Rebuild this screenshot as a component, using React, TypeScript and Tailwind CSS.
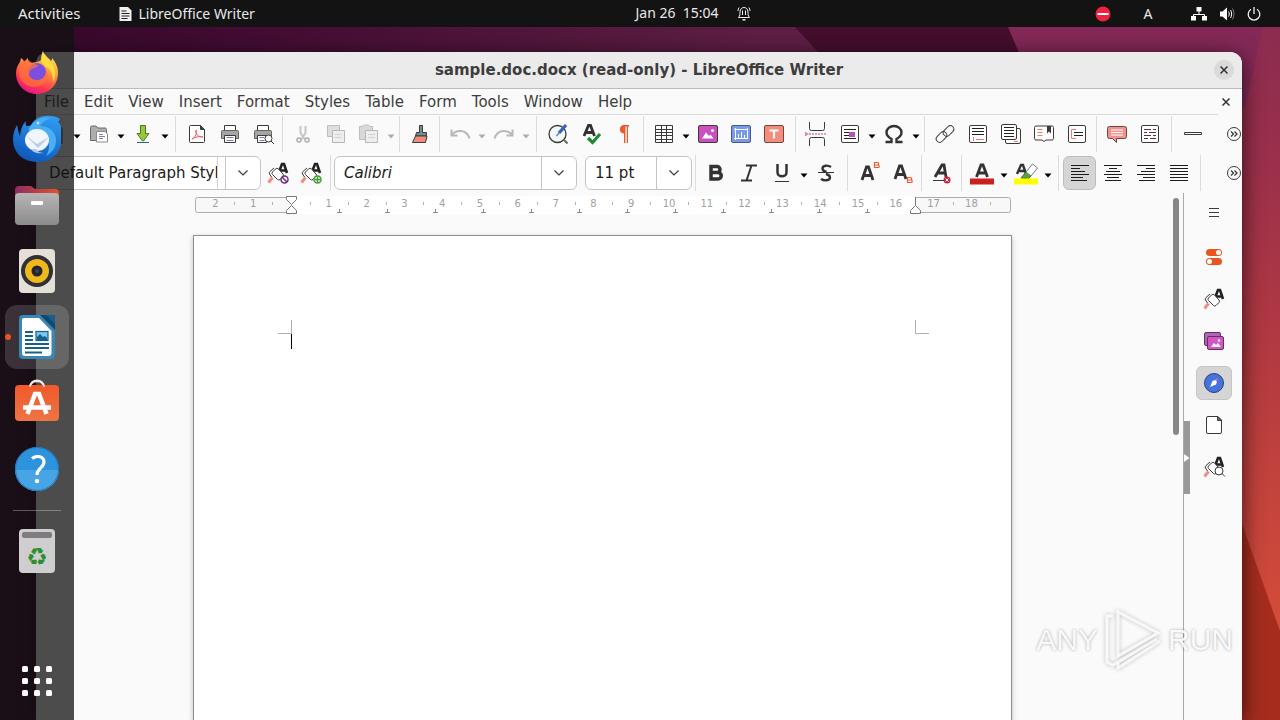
import React from 'react';

interface IconProps {
  children: React.ReactNode;
  size?: string;
  box?: string;
}

const Icon: React.FC<IconProps> = ({ children, size = 'w-6 h-6', box = '0 0 24 24' }) => (
  <svg viewBox={box} className={`${size} shrink-0`} fill="none" stroke="#3a3a38" strokeWidth="1" aria-hidden="true">
    {children}
  </svg>
);

interface ToolProps {
  label: string;
  active?: boolean;
  disabled?: boolean;
  children: React.ReactNode;
}

const Tool: React.FC<ToolProps> = ({ label, active, disabled, children }) => (
  <button
    type="button"
    aria-label={label}
    title={label}
    disabled={disabled}
    className={`flex h-[34px] w-[33px] shrink-0 items-center justify-center rounded-md ${
      active ? 'border border-[#bdbdbd] bg-[#d5d5d5]' : ''
    } ${disabled ? 'opacity-40' : ''}`}
  >
    <Icon>{children}</Icon>
  </button>
);

const Arrow: React.FC<{ label: string; disabled?: boolean }> = ({ label, disabled }) => (
  <button
    type="button"
    aria-label={label}
    disabled={disabled}
    className={`flex h-[34px] w-[11px] shrink-0 items-center justify-center ${disabled ? 'opacity-30' : ''}`}
  >
    <svg viewBox="0 0 8 5" className="mt-1 h-[5px] w-2" aria-hidden="true">
      <path d="M.5 .5h7L4 4.500z" fill="#000" />
    </svg>
  </button>
);

const Sep: React.FC<{ wide?: boolean }> = ({ wide }) => (
  <div className={`flex h-9 shrink-0 justify-center ${wide ? 'w-[10px]' : 'w-[7px]'}`}>
    <div className="w-px bg-[#dcdcdc]" />
  </div>
);

const Overflow: React.FC<{ label: string }> = ({ label }) => (
  <button type="button" aria-label={label} className="ml-auto flex h-[34px] w-4 shrink-0 items-center justify-center">
    <Icon size="w-4 h-4" box="0 0 16 16">
      <circle cx="8" cy="8" r="6.500" />
      <path d="M5 5.500l2.500 2.500L5 10.500M8.500 5.500L11 8l-2.500 2.500" strokeWidth="1.300" />
    </Icon>
  </button>
);

const Chevron: React.FC = () => (
  <svg viewBox="0 0 10 6" className="h-[6px] w-[10px]" fill="none" stroke="#3a3a38" strokeWidth="1.200" aria-hidden="true">
    <path d="M.5 .5L5 5L9.500 .5" />
  </svg>
);

/* Paint roller with a letter A, shared by the style icons */
const StyleRoller: React.FC = () => (
  <>
    <path d="M12.500 12l3.500-9h2l3 9M14 9.500h6" stroke="#222" strokeWidth="2.600" />
    <path d="M2.500 21.500l4-5" stroke="#f28b82" strokeWidth="3" />
    <path d="M5.500 16l-2-3a2 2 0 0 1 .5-2.500l4-3.500" />
    <path d="M6.500 11l3-3a2 2 0 0 1 3 0l4.500 5a2 2 0 0 1 0 2.500l-3 3a2 2 0 0 1-2.500 0l-5-5a1.800 1.800 0 0 1 0-2.500z" fill="#fff" />
  </>
);

const StandardToolbar: React.FC = () => (
  <div className="flex h-[38px] shrink-0 items-center pl-[2px]" role="toolbar" aria-label="Standard">
    <Tool label="New">
      <path d="M5 2.500h10l4 4v15H5z" fill="#fff" />
    </Tool>
    <Arrow label="New options" />
    <Tool label="Open">
      <path d="M3.500 18.500v-13a1.500 1.500 0 0 1 1.500-1.500h4l2 2h7a1.500 1.500 0 0 1 1.500 1.500v11z" fill="#adadab" stroke="#6a6a68" />
      <path d="M9.500 9.500h8.500l2.500 2.500v8H9.500z" fill="#fff" stroke="#8a8a88" />
      <path d="M12 12.500h4M12 14.500h6M12 16.500h4" stroke="#7a83ae" />
    </Tool>
    <Arrow label="Recent documents" />
    <Tool label="Save">
      <path d="M9.500 3.500h5v8h3.500l-5.500 7.500h-1L6 11.500h3.500z" fill="#92c83e" stroke="#4d7a16" />
      <path d="M6 20.500h12" stroke="#2e5f8f" />
    </Tool>
    <Arrow label="Save options" />
    <Sep wide />
    <Tool label="Export as PDF">
      <path d="M4.500 4.500a1 1 0 0 1 1-1h10l4 4v12a1 1 0 0 1-1 1h-13a1 1 0 0 1-1-1z" fill="#fff" />
      <path d="M15.500 3.500v4h4z" fill="#3a3a38" />
      <path d="M7 17c4-2 5-6 4-9-1 4 2 7 7 7-4-1-8 0-11 2z" stroke="#ed5a6b" />
    </Tool>
    <Tool label="Print">
      <path d="M6.500 8.500v-5h11v5" fill="#fff" />
      <path d="M3.500 9.500a1 1 0 0 1 1-1h15a1 1 0 0 1 1 1v7h-3v-3h-11v3h-3z" fill="#a5a5a3" stroke="#656563" />
      <path d="M6.500 13.500h11v7h-11z" fill="#fff" />
      <path d="M8.500 15.500h7M8.500 18.500h7" stroke="#747eb5" />
    </Tool>
    <Tool label="Print Preview">
      <path d="M6.500 8.500v-5h11v5" fill="#fff" />
      <path d="M3.500 9.500a1 1 0 0 1 1-1h15a1 1 0 0 1 1 1v7h-3v-3h-11v3h-3z" fill="#a5a5a3" stroke="#656563" />
      <path d="M6.500 13.500h9v7h-9z" fill="#fff" />
      <path d="M8.500 15.500h5M8.500 18.500h5" stroke="#747eb5" />
      <circle cx="17.500" cy="16.500" r="3.500" fill="#fff" />
      <path d="M20 19l3 3" />
    </Tool>
    <Sep />
    <Tool label="Cut" disabled>
      <path d="M9.500 4v7l4 6M14.500 4v7l-4 6" stroke="#777" strokeWidth="2" />
      <circle cx="8" cy="18" r="2" strokeWidth="1.500" />
      <circle cx="16" cy="18" r="2" strokeWidth="1.500" />
    </Tool>
    <Tool label="Copy" disabled>
      <path d="M3.500 3.500h12v11h-12z" fill="#b5b5b3" stroke="#666" />
      <path d="M8.500 8.500h12v12h-12z" fill="#ddd" stroke="#555" />
      <path d="M11 12.500h7M11 15.500h7" stroke="#999" />
    </Tool>
    <Tool label="Paste" disabled>
      <path d="M2.500 4.500h3l1-1.500h5l1 1.500h3v13h-13z" fill="#aaaaa8" stroke="#666" />
      <path d="M8.500 8.500h12v12h-12z" fill="#ddd" stroke="#555" />
      <path d="M11 12.500h7M11 15.500h7" stroke="#999" />
    </Tool>
    <Arrow label="Paste options" disabled />
    <Sep />
    <Tool label="Clone Formatting">
      <path d="M11.500 3.500h3v7h4v3.500h-11l1-3.500h3z" fill="#6f8d92" />
      <path d="M7.500 14h11.500l-1.500 6.500H4.500z" fill="#f28b7c" />
    </Tool>
    <Sep />
    <Tool label="Undo" disabled>
      <path d="M3.500 7.500v6h6M3.500 13.500c4-6 15-7 18 3" strokeWidth="2" stroke="#555" />
    </Tool>
    <Arrow label="Undo history" disabled />
    <Tool label="Redo" disabled>
      <path d="M20.500 7.500v6h-6M20.500 13.500c-4-6-15-7-18 3" strokeWidth="2" stroke="#555" />
    </Tool>
    <Arrow label="Redo history" disabled />
    <Sep wide />
    <Tool label="Find and Replace">
      <circle cx="11.500" cy="12" r="8.500" fill="#f4f7fa" strokeWidth="1.300" />
      <path d="M17.500 17.500l4 4" strokeWidth="2" stroke="#666" />
      <path d="M13 11l7-8" stroke="#2f62c4" strokeWidth="3.200" />
      <path d="M10.500 14l2.500-3" strokeWidth="1.200" stroke="#4d76bd" />
    </Tool>
    <Tool label="Spelling">
      <path d="M5 14L9.500 3.500h2L15.500 14M6.500 10.500h7.500" stroke="#333" strokeWidth="2.800" />
      <path d="M9 16l4.500 4.500L21 12" stroke="#1d8a34" strokeWidth="3.200" />
    </Tool>
    <Tool label="Formatting Marks">
      <path d="M12 3h5v1.500h-1V21h-1.200V4.500h-1.400V21h-1.400v-9.500a4.200 4.200 0 0 1 0-8.500z" fill="#ea5a2b" stroke="none" />
    </Tool>
    <Sep />
    <Tool label="Insert Table">
      <path d="M3.500 3.500h17v17h-17zM3.500 7.500h17M3.500 10.500h17M3.500 13.500h17M3.500 17.500h17M9.500 3.500v17M14.500 3.500v17" />
    </Tool>
    <Arrow label="Table size" />
    <Tool label="Insert Image">
      <rect x="2.500" y="3.500" width="19" height="17" rx="1.500" fill="#cb4fc0" />
      <path d="M6 16.500l4-6 3 3.500 1.500-1.500 3 4z" fill="#fff" stroke="none" />
      <circle cx="16.500" cy="8.500" r="1.500" fill="#fff" stroke="none" />
    </Tool>
    <Tool label="Insert Chart">
      <rect x="2.500" y="3.500" width="19" height="17" rx="1.500" fill="#789be8" stroke="#4c5a80" />
      <path d="M6.500 6v12M5 16.500h14M5 7.500h14M18.500 6v11M9.500 16v-4M12.500 16v-6M15.500 16v-3" stroke="#fff" />
    </Tool>
    <Tool label="Insert Text Box">
      <rect x="2.500" y="3.500" width="19" height="17" rx="1.500" fill="#f58b78" stroke="#6b4a45" />
      <path d="M7.500 8.500h9M12 8.500v8" stroke="#fff" strokeWidth="2.200" />
    </Tool>
    <Sep wide />
    <Tool label="Insert Page Break">
      <path d="M4.500 0v6.500a2 2 0 0 0 2 2h11a2 2 0 0 0 2-2V0M4.500 24v-6.500a2 2 0 0 1 2-2h11a2 2 0 0 1 2 2V24" />
      <path d="M4 12h17" stroke="#c0447c" strokeDasharray="2 1" />
      <path d="M0 9.500v5l4-2.500z" fill="#d987ad" stroke="none" />
    </Tool>
    <Tool label="Insert Field">
      <rect x="3.500" y="3.500" width="17" height="17" rx="1.500" fill="#fff" />
      <path d="M6 7.500h12M6 10.500h5M6 13.500h5M6 16.500h12" stroke="#222" />
      <path d="M11 10h6v5h-6z" fill="#b552b5" stroke="none" />
    </Tool>
    <Arrow label="Field options" />
    <Tool label="Insert Special Character">
      <path d="M3.500 20h6v-3C6 15 4.500 12.500 4.500 10.500a7.500 6.500 0 0 1 15 0c0 2-1.500 4.500-5 6.500v3h6" stroke="#333" strokeWidth="2.400" />
    </Tool>
    <Arrow label="Recent characters" />
    <Sep />
    <Tool label="Insert Hyperlink">
      <rect x="2.500" y="11.500" width="12" height="7" rx="3.500" transform="rotate(-45 8.500 15)" />
      <rect x="9.500" y="5.500" width="12" height="7" rx="3.500" transform="rotate(-45 15.500 9)" />
    </Tool>
    <Tool label="Insert Footnote">
      <rect x="3.500" y="3.500" width="17" height="17" rx="1.500" fill="#fff" />
      <path d="M6 6.500h12M6 9.500h12M6 12.500h12" stroke="#222" />
      <path d="M7.500 15v4M10 17.500h8" stroke="#ef7a70" />
    </Tool>
    <Tool label="Insert Endnote">
      <rect x="6.500" y="6.500" width="15" height="15" rx="1.500" fill="#fff" />
      <rect x="2.500" y="2.500" width="15" height="15" rx="1.500" fill="#fff" />
      <path d="M5 5.500h10M5 8.500h10M5 11.500h10M5 14.500h10" stroke="#222" />
      <path d="M15 19.500h4" stroke="#ef7a70" />
    </Tool>
    <Tool label="Insert Bookmark">
      <path d="M2.500 5.500a1.500 1.500 0 0 1 1.500-1.500h16a1.500 1.500 0 0 1 1.500 1.500v11a1.500 1.500 0 0 1-1.500 1.500h-6l-2 1.500-2-1.500H4a1.500 1.500 0 0 1-1.500-1.500z" fill="#fff" />
      <path d="M5.500 7.500h5M5.500 10.500h5M5.500 13.500h5" stroke="#ef7a70" />
      <path d="M15 4h4v7.500l-2-2-2 2z" fill="#3a3a38" stroke="none" />
    </Tool>
    <Tool label="Insert Cross-reference">
      <rect x="3.500" y="3.500" width="17" height="17" rx="1.500" fill="#fff" />
      <path d="M11 7.500H6.500v9H11" stroke="#ef7a70" />
      <path d="M9 10.500h9M9 13.500h9" stroke="#222" />
    </Tool>
    <Sep />
    <Tool label="Insert Comment">
      <path d="M4.500 4.500h15a2 2 0 0 1 2 2v8a2 2 0 0 1-2 2h-8v4l-4-4h-3a2 2 0 0 1-2-2v-8a2 2 0 0 1 2-2z" fill="#f0938c" stroke="#6d4643" />
      <path d="M6 8h12M6 10.500h12M6 13h12" stroke="#fff" />
    </Tool>
    <Tool label="Track Changes">
      <rect x="3.500" y="3.500" width="17" height="17" rx="1.500" fill="#fff" />
      <path d="M6 7.500h7M15 7.500h3M6 10.500h3M11 10.500h7M6 13.500h7M15 13.500h3M6 16.500h4M12 16.500h6" stroke="#5b3044" />
    </Tool>
    <Sep wide />
    <Tool label="Insert Line">
      <path d="M3.500 10.500h17v2h-17z" />
    </Tool>
    <Overflow label="More standard tools" />
  </div>
);

const FormattingToolbar: React.FC = () => (
  <div className="flex h-10 shrink-0 items-center" role="toolbar" aria-label="Formatting">
    <div className="flex h-[34px] w-[225px] shrink-0 overflow-hidden rounded-md border border-[#c4c4c4] bg-white">
      <input
        aria-label="Paragraph style"
        defaultValue="Default Paragraph Style"
        className="w-[181px] border-r border-[#d4d4d4] pl-3 text-[15px] text-[#1a1a1a] outline-none"
      />
      <button type="button" aria-label="Paragraph style list" className="ml-[7px] flex grow items-center justify-center border-l border-[#c4c4c4]">
        <Chevron />
      </button>
    </div>
    <Tool label="Update Selected Style">
      <StyleRoller />
      <circle cx="18.500" cy="18.500" r="3.500" fill="#fff" stroke="#6e2a82" strokeWidth="1.500" />
      <path d="M16 16l5 5" stroke="#6e2a82" strokeWidth="1.500" />
    </Tool>
    <Tool label="New Style from Selection">
      <StyleRoller />
      <circle cx="18.500" cy="18.500" r="3.500" fill="#fff" stroke="#3c9a30" strokeWidth="1.500" />
      <path d="M18.500 16v5M16 18.500h5" stroke="#3c9a30" strokeWidth="1.500" />
    </Tool>
    <Sep />
    <div className="flex h-[34px] w-[243px] shrink-0 overflow-hidden rounded-md border border-[#c4c4c4] bg-white">
      <input
        aria-label="Font name"
        defaultValue="Calibri"
        className="w-[207px] border-r border-[#c4c4c4] pl-[9px] text-[15px] text-[#1a1a1a] italic outline-none"
      />
      <button type="button" aria-label="Font list" className="flex grow items-center justify-center">
        <Chevron />
      </button>
    </div>
    <div className="ml-2 flex h-[34px] w-[107px] shrink-0 overflow-hidden rounded-md border border-[#c4c4c4] bg-white">
      <input
        aria-label="Font size"
        defaultValue="11 pt"
        className="w-[71px] border-r border-[#c4c4c4] pl-[9px] text-[15px] text-[#1a1a1a] outline-none"
      />
      <button type="button" aria-label="Font size list" className="flex grow items-center justify-center">
        <Chevron />
      </button>
    </div>
    <Sep />
    <Tool label="Bold">
      <path d="M7 5.500h6a2.800 2.800 0 0 1 0 6H7zM7 11.500h7a3 3 0 0 1 0 6.500H7z" stroke="#333" strokeWidth="3.500" />
    </Tool>
    <Tool label="Italic">
      <path d="M9 4.500h11M4 19.500h11M14.500 4.500l-5 15" stroke="#333" strokeWidth="2" />
    </Tool>
    <Tool label="Underline">
      <path d="M7.500 3v8.500c0 5 9 5 9 0V3" stroke="#333" strokeWidth="2.500" />
      <path d="M5 20.500h14" stroke="#333" />
    </Tool>
    <Arrow label="Underline styles" />
    <Tool label="Strikethrough">
      <path d="M17 6c-3-2-8.500-2-8.500 1.500 0 2 2 3 4 3.500M12 13c2 .5 4 1.500 4 3.500 0 3.500-6 3.500-9 1.500" stroke="#333" strokeWidth="2.400" />
      <path d="M4 11.500h16" stroke="#333" />
    </Tool>
    <Sep wide />
    <Tool label="Superscript">
      <path d="M5 19l4.500-13h2L16 19M6.500 14.500h8" stroke="#333" strokeWidth="2.800" />
      <path d="M17.500 1.500h3a1 1 0 0 1 0 2.500h-3zM17.500 4h3.500a1 1 0 0 1 0 2.500h-3.500z" stroke="#ea5a2b" strokeWidth="1.200" />
    </Tool>
    <Tool label="Subscript">
      <path d="M5 18l4.500-13h2L16 18M6.500 13.500h8" stroke="#333" strokeWidth="2.800" />
      <path d="M17.500 16.500h3a1 1 0 0 1 0 2.500h-3zM17.500 19h3.500a1 1 0 0 1 0 2.500h-3.500z" stroke="#ea5a2b" strokeWidth="1.200" />
    </Tool>
    <Sep />
    <Tool label="Clear Direct Formatting">
      <path d="M5 16l7-12h2l2 12M8 12h8" stroke="#333" strokeWidth="2.800" />
      <path d="M3 19.500h12" />
      <circle cx="17" cy="19" r="3.500" fill="#c8203c" stroke="none" />
      <path d="M15.500 17.500l3 3M18.500 17.500l-3 3" stroke="#fff" />
    </Tool>
    <Sep />
    <Tool label="Font Color">
      <path d="M6.500 16l4.500-12h2l4.500 12M8 12h8" stroke="#333" strokeWidth="2.800" />
      <path d="M0 20.500h24" stroke="#c9211e" strokeWidth="6" />
    </Tool>
    <Arrow label="Font color list" />
    <Tool label="Highlighting">
      <path d="M3 13l4-9h2l3 9M4 10h7" stroke="#333" strokeWidth="2.400" />
      <path d="M7 17l5-6 5 4-3 3z" fill="#5da13a" stroke="#3f7427" />
      <path d="M12 11l6.500-8 5 4-6.500 8z" fill="#fff" stroke="#6f7c84" />
      <path d="M0 20.500h24" stroke="#ffff00" strokeWidth="6" />
    </Tool>
    <Arrow label="Highlighting list" />
    <Sep wide />
    <Tool label="Align Left" active>
      <path d="M3 4.500h18M3 7.500h9M3 10.500h14M3 13.500h18M3 16.500h12M3 19.500h16" stroke="#1c1c1c" />
    </Tool>
    <Tool label="Align Center">
      <path d="M3 4.500h18M8 7.500h8M5 10.500h14M3 13.500h18M6 16.500h12M4 19.500h16" stroke="#1c1c1c" />
    </Tool>
    <Tool label="Align Right">
      <path d="M3 4.500h18M12 7.500h9M7 10.500h14M3 13.500h18M9 16.500h12M5 19.500h16" stroke="#1c1c1c" />
    </Tool>
    <Tool label="Justified">
      <path d="M3 4.500h18M3 7.500h18M3 10.500h18M3 13.500h18M3 16.500h18M3 19.500h18" stroke="#1c1c1c" />
    </Tool>
    <Sep wide />
    <Overflow label="More formatting tools" />
  </div>
);

const labels = Array.from({ length: 21 }, (_, i) => i - 2);
const CM = 37.8;

const Ruler: React.FC = () => (
  <svg viewBox="0 0 819 20" className="mx-auto h-5 w-[819px] shrink-0" fill="none" aria-label="Ruler">
    <rect x="2.500" y="1.500" width="815" height="15" rx="2" fill="#f8f8f8" stroke="#adadad" />
    <rect x="98" y="0" width="624" height="18" fill="#fff" />
    {labels.map((n) => (
      <React.Fragment key={n}>
        {n !== 0 && (
          <text
            x={98 + n * CM}
            y="11"
            textAnchor="middle"
            className={n > 18 ? 'hidden' : 'fill-[#a0a0a0] text-[10px] [font-family:"DejaVu_Sans",sans-serif]'}
          >
            {Math.abs(n)}
          </text>
        )}
        {n < 19 && <path d={`M${Math.round(98 + (n + 0.5) * CM) + 0.5} 6v3`} stroke="#b0b0b0" />}
      </React.Fragment>
    ))}
    {Array.from({ length: 12 }, (_, i) => Math.round(98 + (i + 1) * 48) + 0.5).map((x) => (
      <path key={x} d={`M${x} 13v3M${x - 2.5} 16.500h5`} stroke="#8a8a8a" />
    ))}
    <path d="M93.500 .5h10v3l-5 5-5-5zM93.500 17.500h10v-3l-5-5-5 5z" fill="#fff" stroke="#777" />
    <path d="M717.500 17.500h10v-3l-5-5-5 5zM722.500 9v-8" fill="#fff" stroke="#777" />
  </svg>
);

const Document: React.FC = () => (
  <div className="flex min-w-0 grow flex-col pt-[3px]">
    <Ruler />
    <div className="mx-auto mt-[19px] flex w-[819px] grow flex-col border border-b-0 border-[#8f8f8f] bg-white pt-[84px] shadow-[0_2px_5px_rgba(0,0,0,0.25)]">
      <div className="flex justify-between pr-[82px] pl-[84px]">
        <svg viewBox="0 0 14 14" className="h-[14px] w-[14px]" fill="none" stroke="#b0b0b0">
          <path d="M13.500 0v13.500H0" />
        </svg>
        <svg viewBox="0 0 14 14" className="h-[14px] w-[14px]" fill="none" stroke="#b0b0b0">
          <path d="M.5 0v13.500H14" />
        </svg>
      </div>
      <div className="ml-[97px] h-[15px] w-px bg-black" />
    </div>
  </div>
);

const SideTab: React.FC<ToolProps> = ({ label, active, children }) => (
  <button
    type="button"
    aria-label={label}
    title={label}
    className={`flex h-[34px] w-9 shrink-0 items-center justify-center rounded-md ${active ? 'border border-[#c6c6c6] bg-[#d5d5d5]' : ''}`}
  >
    <Icon>{children}</Icon>
  </button>
);

const Sidebar: React.FC = () => (
  <aside className="flex w-[59px] shrink-0 border-l border-[#a8a8a8]">
    <button
      type="button"
      aria-label="Hide sidebar"
      className="mt-[228px] flex h-[73px] w-[6px] items-center bg-[#999999]"
    >
      <svg viewBox="0 0 6 8" className="h-2 w-[6px]">
        <path d="M0 0l5.500 4L0 8z" fill="#fff" />
      </svg>
    </button>
    <div className="flex grow flex-col items-center gap-2 pt-[3px] pr-1">
      <div className="pb-[2px]">
        <SideTab label="Sidebar Settings">
          <path d="M7 7.500h10M7 11.500h10M7 15.500h10" />
        </SideTab>
      </div>
      <SideTab label="Properties">
        <rect x="4" y="4" width="16" height="7" rx="3.500" fill="#e95420" stroke="none" />
        <circle cx="16.500" cy="7.500" r="2.500" fill="#fff" stroke="none" />
        <rect x="4" y="13" width="16" height="7" rx="3.500" fill="#e95420" stroke="none" />
        <circle cx="7.500" cy="16.500" r="2.500" fill="#fff" stroke="none" />
      </SideTab>
      <SideTab label="Styles">
        <StyleRoller />
      </SideTab>
      <SideTab label="Gallery">
        <rect x="2.500" y="3.500" width="16" height="13" rx="1.500" fill="#b163b8" stroke="#64305f" />
        <rect x="5.500" y="7.500" width="16" height="13" rx="1.500" fill="#d254c6" stroke="#64305f" />
        <path d="M9 18l3-4 2 2 2-2 3 4z" fill="#fff" stroke="none" />
        <circle cx="17" cy="11.500" r="1.300" fill="#fff" stroke="none" />
      </SideTab>
      <SideTab label="Navigator" active>
        <circle cx="12" cy="12" r="9.500" fill="#4673df" stroke="#2d4076" />
        <path d="M8 16l2.500-6 3.500 3.500z" fill="#fff" stroke="none" />
        <path d="M12 9.500l4-2.500-1.500 4z" fill="#f07c86" stroke="none" />
        <circle cx="12.500" cy="11.500" r="2.200" fill="#fff" stroke="none" />
      </SideTab>
      <SideTab label="Page">
        <path d="M4.500 5a1.500 1.500 0 0 1 1.500-1.500h10l3.500 3.500v12a1.500 1.500 0 0 1-1.500 1.500H6A1.500 1.500 0 0 1 4.500 19z" fill="#fff" />
        <path d="M15.500 3.500v4h4z" fill="#777" />
      </SideTab>
      <SideTab label="Style Inspector">
        <StyleRoller />
        <circle cx="17" cy="16" r="4" fill="#fff" />
        <path d="M20 18.500l3 3" />
      </SideTab>
    </div>
  </aside>
);

const menus = ['File', 'Edit', 'View', 'Insert', 'Format', 'Styles', 'Table', 'Form', 'Tools', 'Window', 'Help'];

const CloseMark: React.FC = () => (
  <svg viewBox="0 0 8 8" className="h-2 w-2" stroke="#333" strokeWidth="1.500" aria-hidden="true">
    <path d="M.5 .5l7 7M7.500 .5l-7 7" />
  </svg>
);

const WriterWindow: React.FC = () => (
  <main className="absolute top-[52px] right-[38px] bottom-0 left-9 flex flex-col overflow-hidden rounded-t-xl bg-[#fafafa] text-[#3d3d3d] shadow-[0_4px_22px_rgba(0,0,0,0.7)] [font-family:'DejaVu_Sans',sans-serif]">
    <header className="flex h-[37px] shrink-0 items-center border-b border-[#bcbcbc] bg-[#ebebeb] pr-2 pl-7">
      <h1 className="grow text-center text-[15px] font-bold">sample.doc.docx (read-only) - LibreOffice Writer</h1>
      <button type="button" aria-label="Close window" className="flex h-5 w-5 items-center justify-center rounded-full bg-[#dadada]">
        <CloseMark />
      </button>
    </header>
    <div className="flex h-[26px] shrink-0 items-center">
      <nav className="flex grow items-center gap-[15px] self-stretch border-b border-[#dadada] pt-[2px] pl-2 text-[15px]">
        {menus.map((m) => (
          <button key={m} type="button">
            {m}
          </button>
        ))}
      </nav>
      <button type="button" aria-label="Close document" className="flex h-6 w-6 items-center justify-center pr-2">
        <CloseMark />
      </button>
    </div>
    <StandardToolbar />
    <FormattingToolbar />
    <div className="flex min-h-0 grow">
      <Document />
      <div className="flex w-[14px] shrink-0 justify-center pt-[5px]">
        <div className="h-[237px] w-[6px] rounded-full bg-[#888888]" />
      </div>
      <Sidebar />
    </div>
  </main>
);

interface DockItemProps {
  label: string;
  running?: boolean;
  children: React.ReactNode;
}

const DockItem: React.FC<DockItemProps> = ({ label, running, children }) => (
  <button
    type="button"
    aria-label={label}
    title={label}
    className={`relative flex h-16 w-16 shrink-0 items-center justify-center rounded-xl ${running ? 'bg-white/15' : ''}`}
  >
    {running && <span className="absolute top-[29px] left-0 h-[6px] w-[6px] rounded-full bg-[#e95420]" />}
    <svg viewBox="0 0 48 48" className="h-12 w-12" aria-hidden="true">
      {children}
    </svg>
  </button>
);

const Dock: React.FC = () => (
  <aside className="absolute top-0 bottom-0 left-0 flex w-[74px] flex-col items-center gap-[2px] bg-[#111111]/75 pt-[14px] pb-[6px]">
    <svg width="0" height="0" className="absolute">
      <defs>
        <linearGradient id="fox" x1="0.8" y1="0" x2="0.3" y2="1">
          <stop offset="0" stopColor="#fff44f" />
          <stop offset="0.4" stopColor="#ff9640" />
          <stop offset="0.75" stopColor="#ff3750" />
          <stop offset="1" stopColor="#e31587" />
        </linearGradient>
        <linearGradient id="bird" x1="0.7" y1="0" x2="0.3" y2="1">
          <stop offset="0" stopColor="#2f9bf0" />
          <stop offset="1" stopColor="#0d55b8" />
        </linearGradient>
        <linearGradient id="folder" x1="0" y1="0" x2="1" y2="0">
          <stop offset="0" stopColor="#8b2e62" />
          <stop offset="1" stopColor="#e8502a" />
        </linearGradient>
        <linearGradient id="grey" x1="0" y1="0" x2="0" y2="1">
          <stop offset="0" stopColor="#b5b5b5" />
          <stop offset="1" stopColor="#8c8c8c" />
        </linearGradient>
        <linearGradient id="bag" x1="0" y1="0" x2="0" y2="1">
          <stop offset="0" stopColor="#f0592a" />
          <stop offset="1" stopColor="#ee7444" />
        </linearGradient>
      </defs>
    </svg>
    <DockItem label="Firefox">
      <path
        d="M30 2c1 4 5 6 8 10 1-1 1-2 1-3 4 5 6 9 6 15 0 12-9 21-21 21S3 36 3 24c0-5 2-8 4-11l1-4c2 1 3 3 3 4l4-4c0 3 1 5 3 5 4-1 8-1 10-3 1-2 0-5 2-9z"
        fill="url(#fox)"
      />
      <circle cx="24" cy="23" r="9" fill="#7b4fe0" />
      <path d="M11 12c3-1 5-1 7 1 2 2 5 2 7 3 0 3-7 3-8 6-3 6 2 9 8 9 6-1 8-5 8-10 4 6 1 13-6 16-9 3-20-2-21-12-1-5 1-10 5-13z" fill="#ff7139" fillOpacity="0.75" />
      <path d="M30 3c1 4 7 8 10 14 3 5 3 11 0 16 0-8-2-13-8-16-4-3-5-7-2-14z" fill="#ffdc3f" />
    </DockItem>
    <DockItem label="Thunderbird">
      <path
        d="M18 10c4-7 11-10 20-9 3 0 6 1 9 3l-2 3c4 3 4 9 4 15 0 14-9 25-24 25C10 47 0 38 0 24c0-6 2-10 4-14 1 4 1 7 3 11 1-7 2-11 6-15-1 5 0 6 5 4z"
        fill="url(#bird)"
      />
      <path d="M17 12c5-8 12-11 21-9-6 2-9 5-11 8 7 0 12 3 15 9 3 9-1 17-9 21 5-8 4-16-2-21-5-4-11-5-15-4-1-2 0-3 1-4z" fill="#4aaef5" />
      <ellipse cx="24" cy="25" rx="12" ry="11" fill="#f2f6fc" />
      <path d="M12.500 20L24 29l12-7-11 11z" fill="#b9cdea" />
      <path d="M23 34c2 3 5 4 8 4-6 1-11 0-13-4z" fill="#a9c9f2" />
      <circle cx="25" cy="8" r="1.200" fill="#d6efff" />
    </DockItem>
    <DockItem label="Files">
      <path d="M2 9a4 4 0 0 1 4-4h12l4 3h20a4 4 0 0 1 4 4v12H2z" fill="url(#folder)" />
      <rect x="2" y="12" width="44" height="32" rx="4" fill="url(#grey)" />
      <rect x="18" y="20" width="12" height="4" rx="1" fill="#fff" />
    </DockItem>
    <DockItem label="Rhythmbox">
      <rect x="6" y="2" width="36" height="44" rx="4" fill="#e4e0d8" />
      <circle cx="24" cy="24" r="16" fill="#303036" />
      <circle cx="24" cy="24" r="12" fill="#efb91d" />
      <circle cx="24" cy="24" r="5.500" fill="#25252b" />
      <circle cx="24" cy="24" r="2" fill="#3c4250" />
    </DockItem>
    <DockItem label="LibreOffice Writer" running>
      <path d="M10 2h19l13 13v27a4 4 0 0 1-4 4H10a4 4 0 0 1-4-4V6a4 4 0 0 1 4-4z" fill="#3a87b5" />
      <path d="M11 5h15l12.500 13v22a3 3 0 0 1-3 3H12a3 3 0 0 1-3-3V7a2 2 0 0 1 2-2z" fill="#fff" />
      <path d="M31 2h11v11z" fill="#175f8a" />
      <path d="M27 2l15 15v-6L33 2z" fill="#0f4a6e" />
      <path d="M12 19h8M12 23h8M12 27h8M12 31h24M12 35h24M12 39.500h17" stroke="#17608c" strokeWidth="1.800" />
      <rect x="23" y="18.500" width="12" height="9" fill="#7cc6ef" stroke="#17608c" strokeWidth="1.200" />
      <path d="M24 27v-3l3-3 3 3 2-1 2 2v2z" fill="#17608c" />
    </DockItem>
    <DockItem label="Ubuntu Software">
      <path d="M17 9c0-9 14-9 14 0" fill="none" stroke="#f4e8de" strokeWidth="2" />
      <rect x="2" y="6" width="44" height="36" rx="4" fill="url(#bag)" />
      <path d="M17 8c0-9 14-9 14 0" fill="none" stroke="#f4e8de" strokeWidth="1.500" />
      <path d="M14.500 35l7.500-20h4L33.500 35" fill="none" stroke="#fff" strokeWidth="4.500" />
      <path d="M10 28.500h28" stroke="#fff" strokeWidth="4.500" />
    </DockItem>
    <DockItem label="Help">
      <circle cx="24" cy="24" r="22" fill="#2d93dc" />
      <path d="M2 25a22 21 0 0 0 44 0z" fill="#47a4e5" />
      <circle cx="24" cy="24" r="21.500" fill="none" stroke="#1d77bd" />
      <path d="M19 13.500c5-4 12-2 12 3.500 0 6-7 6-7 13" fill="none" stroke="#fff" strokeWidth="3.200" />
      <circle cx="24" cy="36" r="2.200" fill="#fff" />
    </DockItem>
    <div className="mt-[7px] mb-[6px] h-px w-12 bg-white/30" />
    <DockItem label="Trash">
      <rect x="6" y="2" width="36" height="44" rx="4" fill="#cfcdcf" />
      <rect x="9" y="5" width="30" height="6" rx="2" fill="#7d7d7d" />
      <text x="24" y="38" textAnchor="middle" className="fill-[#2c8f2c] text-[24px] [font-family:'DejaVu_Sans',sans-serif]">
        ♻
      </text>
    </DockItem>
    <div className="mt-auto">
      <DockItem label="Show Applications">
        {[9, 21, 33].map((y) =>
          [9, 21, 33].map((x) => <rect key={`${x}-${y}`} x={x} y={y - 1} width="6" height="6" rx="1.500" fill="#fff" />)
        )}
      </DockItem>
    </div>
  </aside>
);

const TopBar: React.FC = () => (
  <header className="flex h-[27px] shrink-0 items-center bg-[#131313] text-[14px] text-[#e8e8e8] [font-family:'Noto_Sans',sans-serif]">
    <div className="flex flex-1 items-center gap-[38px] pl-[18px]">
      <button type="button" className="text-[15px]">Activities</button>
      <button type="button" className="flex items-center gap-[7px]">
        <svg viewBox="0 0 13 14" className="h-[14px] w-[13px]">
          <path d="M.5 0h8.500L12.500 3.500V14H.5z" fill="#f0f0f0" />
          <path d="M2.500 4h5M2.500 6.500h8M2.500 9h8M2.500 11.500h6" stroke="#222" />
        </svg>
        LibreOffice Writer
      </button>
    </div>
    <button type="button" className="flex items-center gap-[18px] pb-[2px] pl-[107px] whitespace-pre">
      Jan 26  15:04
      <svg viewBox="0 0 14 16" className="h-4 w-[14px]" fill="none" stroke="#eee">
        <path d="M1.500 12.500h11c-1.500-2-1.500-3-1.500-5.500 0-6-8-6-8 0 0 2.500 0 3.500-1.500 5.500z" />
        <path d="M5.500 14.800h3" strokeWidth="1.500" />
        <path d="M5.500 10V5.500M8.500 10V5.500M1 6c0-1.500.5-2.500 1-3.500M13 6c0-1.500-.5-2.500-1-3.500" />
      </svg>
    </button>
    <div className="flex flex-1 items-center justify-end pr-[19px]">
      <button type="button" aria-label="Do not disturb" className="mr-[32px]">
        <svg viewBox="0 0 16 16" className="h-4 w-4">
          <circle cx="8" cy="8" r="7.500" fill="#ee2340" />
          <path d="M2.500 8h11" stroke="#fff" strokeWidth="2" />
        </svg>
      </button>
      <button type="button" className="mr-[38px] w-[10px] text-center">A</button>
      <button type="button" aria-label="System menu" className="flex items-center gap-3">
        <svg viewBox="0 0 16 14" className="h-[14px] w-4" fill="#fff" stroke="#fff">
          <path d="M5.500 0h5v4.500h-5zM0 9h5v4.500H0zM11 9h5v4.500h-5z" stroke="none" />
          <path d="M8 4v3.500M2.500 10V7.500h11V10" fill="none" />
        </svg>
        <svg viewBox="0 0 16 14" className="h-[14px] w-4" fill="none" stroke="#fff">
          <path d="M1 4.500h2.500L8 .5v13l-4.500-4H1z" fill="#fff" stroke="none" />
          <path d="M9.500 4.500c1 1.500 1 3.500 0 5M11.500 3c1.500 2 1.500 6 0 8" />
          <path d="M13.500 1.500c2 3 2 8 0 11" stroke="#777" />
        </svg>
        <svg viewBox="0 0 14 14" className="h-[14px] w-[14px]" fill="none" stroke="#eee" strokeWidth="1.300">
          <path d="M4 2.300a5.800 5.800 0 1 0 6 0M7 0v7" />
        </svg>
      </button>
    </div>
  </header>
);

const Wallpaper: React.FC = () => (
  <svg viewBox="0 0 1280 693" preserveAspectRatio="none" className="absolute inset-0 h-full w-full" aria-hidden="true">
    <defs>
      <linearGradient id="night" x1="0" y1="0" x2="1" y2="0">
        <stop offset="0" stopColor="#34082a" />
        <stop offset="0.2" stopColor="#430c33" />
        <stop offset="0.6" stopColor="#5e1f44" />
      </linearGradient>
      <linearGradient id="dawn" x1="0" y1="0" x2="0" y2="1">
        <stop offset="0" stopColor="#8c2c50" />
        <stop offset="0.2" stopColor="#9b304b" />
        <stop offset="0.5" stopColor="#b53b40" />
        <stop offset="0.85" stopColor="#d34b39" />
      </linearGradient>
    </defs>
    <rect width="1280" height="693" fill="url(#night)" />
    <path d="M795 0h230v60H850z" fill="#450e2c" />
    <path d="M1008 0h272v693h-80V200z" fill="url(#dawn)" />
    <path d="M1008 0h255l-18 80h-203z" fill="#842957" />
    <path d="M1200 420l42 77 38 107v89h-80z" fill="#a62d1e" />
  </svg>
);

const Watermark: React.FC = () => (
  <div className="pointer-events-none absolute right-[47px] bottom-[48px] flex items-center gap-[6px] text-[30px] leading-none text-white/90 [font-family:'Liberation_Sans',sans-serif] [text-shadow:0_0_3px_rgba(0,0,0,0.35)]">
    <span>ANY</span>
    <svg viewBox="0 0 58 64" className="h-16 w-[58px] [filter:drop-shadow(0_0_2px_rgba(0,0,0,0.3))]" fill="none" stroke="#fff" strokeOpacity="0.8" strokeWidth="3">
      <path d="M14 4v44l40-23z" />
      <path d="M9 8H3v46l6 3 44-26" />
      <path d="M14 55v5l42-27" />
    </svg>
    <span>RUN</span>
  </div>
);

const App: React.FC = () => (
  <div className="flex h-screen flex-col overflow-hidden bg-[#34082a]">
    <TopBar />
    <div className="relative grow overflow-hidden">
      <Wallpaper />
      <div className="absolute inset-0 -top-[27px]">
        <WriterWindow />
      </div>
      <Dock />
      <Watermark />
    </div>
  </div>
);

export default App;
